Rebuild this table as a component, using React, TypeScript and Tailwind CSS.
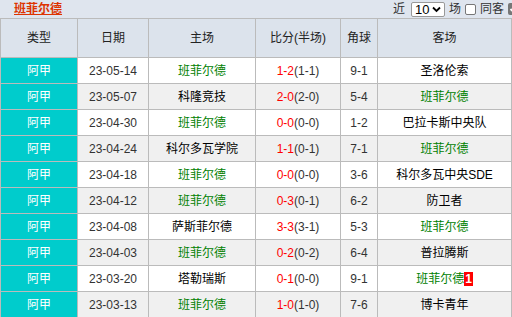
import React from 'react'

const rows = [
  { date: '23-05-14', home: '班菲尔德', score: '1-2', half: '(1-1)', corner: '9-1', away: '圣洛伦索' },
  { date: '23-05-07', home: '科隆竞技', score: '2-0', half: '(2-0)', corner: '5-4', away: '班菲尔德' },
  { date: '23-04-30', home: '班菲尔德', score: '0-0', half: '(0-0)', corner: '1-2', away: '巴拉卡斯中央队' },
  { date: '23-04-24', home: '科尔多瓦学院', score: '1-1', half: '(0-1)', corner: '7-1', away: '班菲尔德' },
  { date: '23-04-18', home: '班菲尔德', score: '0-0', half: '(0-0)', corner: '3-6', away: '科尔多瓦中央SDE' },
  { date: '23-04-12', home: '班菲尔德', score: '0-3', half: '(0-1)', corner: '6-2', away: '防卫者' },
  { date: '23-04-08', home: '萨斯菲尔德', score: '3-3', half: '(3-1)', corner: '5-3', away: '班菲尔德' },
  { date: '23-04-03', home: '班菲尔德', score: '0-2', half: '(0-2)', corner: '6-4', away: '普拉腾斯' },
  { date: '23-03-20', home: '塔勒瑞斯', score: '0-1', half: '(0-0)', corner: '9-1', away: '班菲尔德', badge: '1' },
  { date: '23-03-13', home: '班菲尔德', score: '1-0', half: '(1-0)', corner: '7-6', away: '博卡青年' },
]

const team = '班菲尔德'
const font = { fontFamily: '"Liberation Sans", "Noto Sans CJK SC", sans-serif' }

function Team({ name, badge }: { name: string; badge?: string }) {
  return (
    <span className={name === team ? 'text-[#008000]' : 'text-black'}>
      {name}
      {badge && <span className="bg-[#ff0000] text-white font-bold px-px">{badge}</span>}
    </span>
  )
}

export default function App() {
  return (
    <div className="w-[512px] h-[317px] overflow-hidden bg-[#dfe5ee] text-[12px]" style={font}>
      {/* top bar */}
      <div className="h-[18px] flex items-center overflow-hidden">
        <a className="ml-[14px] text-[#dd3300] font-bold text-[12px] underline leading-[16px]">班菲尔德</a>
        <div className="ml-auto mr-[-8px] flex items-center text-[#333] text-[12px]">
          <span>近</span>
          <span className="ml-[6px] w-[34px] h-[15px] bg-white border border-[#999] rounded-[2px] flex items-center justify-between px-[3px] text-[13px] text-black leading-none">
            10
            <svg width="9" height="7" viewBox="0 0 9 7"><path d="M1 1.5 L4.5 5 L8 1.5" stroke="#000" strokeWidth="1.8" fill="none" /></svg>
          </span>
          <span className="ml-[4px]">场</span>
          <span className="ml-[4px] w-[11px] h-[11px] bg-white border border-[#777] rounded-[2px]" />
          <span className="ml-[4px]">同客</span>
          <span className="ml-[4px] w-[12px] h-[12px] bg-[#777] rounded-[2px] flex items-center justify-center">
            <svg width="10" height="10" viewBox="0 0 10 10"><path d="M1.5 5 L4 7.5 L8.5 2" stroke="#fff" strokeWidth="1.8" fill="none" /></svg>
          </span>
        </div>
      </div>
      <table className="w-[512px] border-collapse table-fixed">
        <colgroup>
          <col className="w-[77px]" />
          <col className="w-[71px]" />
          <col className="w-[107px]" />
          <col className="w-[85px]" />
          <col className="w-[37px]" />
          <col />
        </colgroup>
        <thead>
          <tr className="h-[39px] bg-[#dce3ec] text-[#222] text-[12px]">
            {['类型', '日期', '主场', '比分(半场)', '角球', '客场'].map((h) => (
              <th key={h} className="border border-[#bbb] font-normal">{h}</th>
            ))}
          </tr>
        </thead>
        <tbody>
          {rows.map((r, i) => (
            <tr key={r.date} className={`h-[26px] text-center text-[12px] ${i % 2 ? 'bg-[#f0f0f0]' : 'bg-white'}`}>
              <td className="border border-[#bbb] bg-[#00cccc] text-white">阿甲</td>
              <td className="border border-[#bbb] text-[#333]">{r.date}</td>
              <td className="border border-[#bbb]"><Team name={r.home} /></td>
              <td className="border border-[#bbb] text-[#333]">
                <span className="text-[#ff0000]">{r.score}</span>{r.half}
              </td>
              <td className="border border-[#bbb] text-[#333]">{r.corner}</td>
              <td className="border border-[#bbb]"><Team name={r.away} badge={r.badge} /></td>
            </tr>
          ))}
        </tbody>
      </table>
    </div>
  )
}
